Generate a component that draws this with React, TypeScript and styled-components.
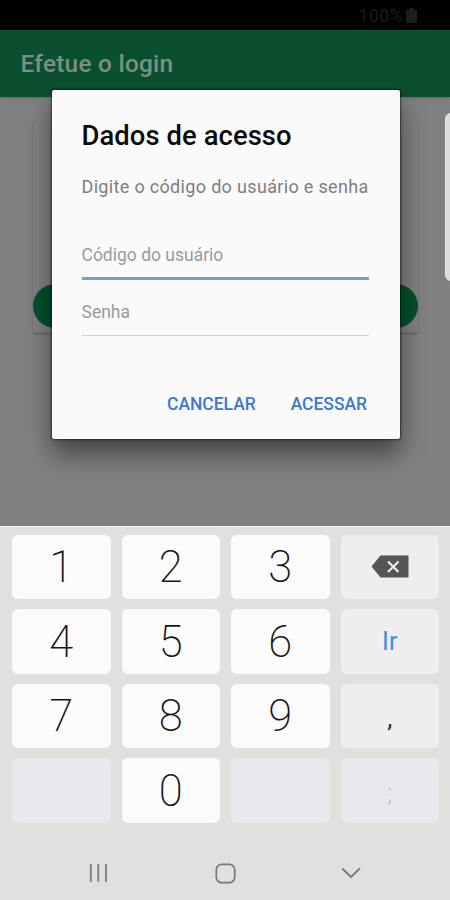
import React from "react";
import styled, { createGlobalStyle } from "styled-components";

const Global = createGlobalStyle`
  * { box-sizing: border-box; }
  body { margin: 0; background: #e0e0e0; font-family: Roboto, "Liberation Sans", sans-serif; }
  button { font: inherit; border: 0; padding: 0; background: none; }
`;

const Phone = styled.div`
  position: relative;
  display: flex;
  flex-direction: column;
  width: 450px;
  height: 900px;
  overflow: hidden;
`;

const StatusBar = styled.div`
  display: flex;
  justify-content: flex-end;
  align-items: center;
  gap: 3px;
  height: 30px;
  padding: 1px 33px 0 0;
  background: #000;
  color: #1b1b1b;
  font-size: 17.5px;
  letter-spacing: 0.5px;
`;

const Toolbar = styled.header`
  display: flex;
  align-items: center;
  height: 67px;
  padding: 0 0 0 20.5px;
  background: #0a502f;
  box-shadow: 0 1px 3px rgba(0, 0, 0, 0.2);
  z-index: 1;
`;

const ToolbarTitle = styled.h1`
  margin: 0;
  color: #7d8f82;
  font-size: 24.4px;
  font-weight: 500;
  line-height: 30px;
  letter-spacing: 0.25px;
  white-space: nowrap;
`;

const Page = styled.main`
  display: flex;
  flex-direction: column;
  height: 429px;
  padding: 25px 32px 0 33px;
  background: #808080;
`;

const Card = styled.section`
  display: flex;
  flex-direction: column;
  justify-content: flex-end;
  height: 211px;
  padding-bottom: 5px;
  border-radius: 3px;
  box-shadow: 0 1px 2px rgba(0, 0, 0, 0.3);
`;

const Pill = styled.div`
  height: 44px;
  border-radius: 22px;
  background: #04502c;
`;

const EdgeHandle = styled.div`
  position: absolute;
  left: 445px;
  top: 113px;
  width: 12px;
  height: 168px;
  border-radius: 6px;
  border: 1px solid #ececec;
  background: #dcdcdc;
`;

const Dialog = styled.section`
  position: absolute;
  z-index: 2;
  left: 51.5px;
  top: 90px;
  width: 348px;
  height: 349px;
  display: flex;
  flex-direction: column;
  padding: 28px 30.5px 0 30px;
  border-radius: 2px;
  background: #fafafa;
  box-shadow: 0 0 2px 1px rgba(0, 0, 0, 0.5), 0 15px 26px rgba(0, 0, 0, 0.48);
`;

const DialogTitle = styled.h2`
  margin: 0;
  color: #0c0c0c;
  font-size: 27.4px;
  font-weight: 500;
  line-height: 36px;
  letter-spacing: 0.08px;
  white-space: nowrap;
`;

const Hint = styled.p`
  margin: 21px 0 0;
  color: #7f7f7f;
  font-size: 18px;
  line-height: 24px;
  letter-spacing: 0.33px;
  white-space: nowrap;
`;

const Field = styled.label<{ $active?: boolean }>`
  display: flex;
  height: ${(p) => (p.$active ? "37px" : "36px")};
  margin-top: ${(p) => (p.$active ? "44px" : "20px")};
  border-bottom: ${(p) => (p.$active ? "3px solid #759fd3" : "1px solid #cfcfcf")};
  color: #9b9b9b;
  font-size: 17.5px;
  line-height: 24px;
`;

const Actions = styled.div`
  display: flex;
  justify-content: flex-end;
  gap: 35px;
  margin-top: 56px;
  padding-right: 2px;
`;

const Action = styled.button`
  color: #3d78cd;
  font-size: 17.45px;
  font-weight: 500;
  line-height: 24px;
  white-space: nowrap;
`;

const Keyboard = styled.div`
  height: 306px;
  padding: 7.7px 11px 0 12px;
  border-top: 1px solid #f0f0f0;
  background: #e0e0e0;
  display: grid;
  grid-template-columns: repeat(4, 98.5px);
  grid-auto-rows: 64.5px;
  column-gap: 11px;
  row-gap: 10.1px;
`;

type Tone = "digit" | "action" | "disabled";
const tones: Record<Tone, string> = { digit: "#fbfbfb", action: "#eeeeee", disabled: "#e7e9ed" };

const Key = styled.button<{ $tone: Tone }>`
  display: flex;
  align-items: center;
  justify-content: center;
  border-radius: 6px;
  background: ${(p) => tones[p.$tone]};
`;

const Digit = styled.span`
  padding-top: 2px;
  color: #151515;
  font-size: 43.5px;
  font-weight: 200;
  line-height: 62px;
`;

const Go = styled.span`
  padding-top: 1px;
  color: #3d8fe0;
  font-size: 25px;
  line-height: 62px;
`;

const Mark = styled.span<{ $faint?: boolean }>`
  padding-top: 4px;
  color: ${(p) => (p.$faint ? "#c2c4c8" : "#333")};
  font-size: 26px;
  font-weight: ${(p) => (p.$faint ? 300 : 400)};
  line-height: 60px;
`;

const NavBar = styled.nav`
  display: grid;
  grid-template-columns: repeat(3, 126px);
  justify-content: center;
  justify-items: center;
  align-items: center;
  height: 68px;
  padding-top: 14px;
  background: #e0e0e0;
`;

const Battery = () => (
  <svg width="11" height="15" viewBox="0 0 11 15">
    <path d="M3.5 0h4v2H10a1 1 0 0 1 1 1v11a1 1 0 0 1-1 1H1a1 1 0 0 1-1-1V3a1 1 0 0 1 1-1h2.500z" fill="#1e1e1e" />
  </svg>
);

const Backspace = () => (
  <svg width="38" height="23" viewBox="0 0 38 23">
    <path d="M0.500 11.500 9.500 0.500H37.500V22.500H9.500Z" fill="#555" />
    <path d="M17 6.500 27.500 17M27.500 6.500 17 17" stroke="#eee" strokeWidth="2.200" fill="none" />
  </svg>
);

const Recents = () => (
  <svg width="20" height="20" viewBox="0 0 20 20">
    <path d="M1.800 1v18M9.300 1v18M17 1v18" stroke="#838383" strokeWidth="2" />
  </svg>
);

const Home = () => (
  <svg width="21" height="21" viewBox="0 0 21 21">
    <rect x="1.300" y="1.300" width="18.400" height="18.400" rx="5.500" stroke="#777" strokeWidth="1.700" fill="none" />
  </svg>
);

const Hide = () => (
  <svg width="20" height="12" viewBox="0 0 20 12">
    <path d="m1.200 1.500 8.800 8.500 8.800-8.500" stroke="#777" strokeWidth="1.800" fill="none" />
  </svg>
);

type KeySpec = { id: string; tone: Tone; face?: React.ReactNode };
const digit = (n: string): KeySpec => ({ id: n, tone: "digit", face: <Digit>{n}</Digit> });

const keys: KeySpec[] = [
  digit("1"), digit("2"), digit("3"),
  { id: "delete", tone: "action", face: <Backspace /> },
  digit("4"), digit("5"), digit("6"),
  { id: "go", tone: "action", face: <Go>Ir</Go> },
  digit("7"), digit("8"), digit("9"),
  { id: "comma", tone: "action", face: <Mark>,</Mark> },
  { id: "blank-left", tone: "disabled" },
  digit("0"),
  { id: "blank-right", tone: "disabled" },
  { id: "semicolon", tone: "disabled", face: <Mark $faint>;</Mark> },
];

export default function App() {
  return (
    <Phone>
      <Global />
      <StatusBar>
        <span>100%</span>
        <Battery />
      </StatusBar>
      <Toolbar>
        <ToolbarTitle>Efetue o login</ToolbarTitle>
      </Toolbar>
      <Page>
        <Card>
          <Pill />
        </Card>
      </Page>
      <EdgeHandle />
      <Dialog>
        <DialogTitle>Dados de acesso</DialogTitle>
        <Hint>Digite o código do usuário e senha</Hint>
        <Field $active>Código do usuário</Field>
        <Field>Senha</Field>
        <Actions>
          <Action>CANCELAR</Action>
          <Action>ACESSAR</Action>
        </Actions>
      </Dialog>
      <Keyboard>
        {keys.map((k) => (
          <Key key={k.id} $tone={k.tone}>{k.face}</Key>
        ))}
      </Keyboard>
      <NavBar>
        <Recents />
        <Home />
        <Hide />
      </NavBar>
    </Phone>
  );
}
